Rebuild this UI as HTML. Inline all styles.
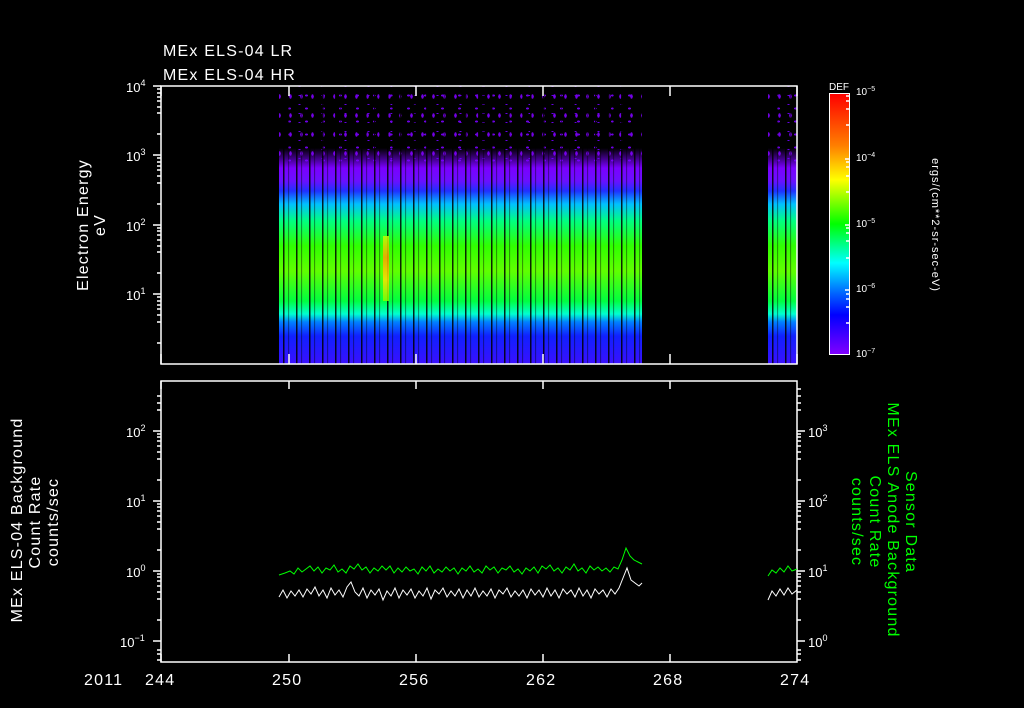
<!DOCTYPE html>
<html><head><style>
html,body{margin:0;padding:0;background:#000;}
#w{position:relative;width:1024px;height:708px;overflow:hidden;background:#000;font-family:"Liberation Sans",sans-serif;color:#fff;}
.spec{position:absolute;top:86px;height:278px;
background:linear-gradient(to bottom,rgba(0,0,0,0) 0px,rgba(0,0,0,0) 62px,rgba(122,0,255,.5) 72px,#7a00ff 82px,#6a10ff 95px,#2030ff 105px,#00c0ff 118px,#00ff80 135px,#30ff00 160px,#60ff00 185px,#00ff40 215px,#00ffd0 228px,#0080ff 236px,#1020ff 250px,#3a10ff 278px);}
.stripes{position:absolute;top:0;left:0;right:0;bottom:0;background:repeating-linear-gradient(to right,rgba(0,0,0,0) 0px,rgba(0,0,0,0) 4px,rgba(0,0,0,.85) 4px,rgba(0,0,0,.85) 5.5px,rgba(0,0,0,0) 5.5px,rgba(0,0,0,0) 9px,rgba(0,0,0,.6) 9px,rgba(0,0,0,0) 10.5px,rgba(0,0,0,0) 13px);}
.dots{position:absolute;top:0;left:0;right:0;height:80px;background-image:radial-gradient(#7a00ff 1.3px,transparent 1.5px),radial-gradient(#8000ff 1.2px,transparent 1.4px),radial-gradient(#7000ff 1.2px,transparent 1.4px);background-size:17px 13px,11px 19px,23px 9px;background-position:2px 3px,6px 1px,9px 5px;opacity:.9;}
.t{letter-spacing:1.2px}
</style></head><body><div id="w">
<div class="spec" style="left:279px;width:363px;"><div class="dots"></div><div class="stripes"></div>
<div style="position:absolute;left:104px;top:150px;width:6px;height:65px;background:linear-gradient(#c0ff00,#ffa000,#ffe000,#80ff00);opacity:.85"></div></div>
<div class="spec" style="left:768px;width:29px;"><div class="dots"></div><div class="stripes"></div></div>
<div style="position:absolute;left:829px;top:93px;width:21px;height:262px;background:linear-gradient(to bottom,#ff0000,#ff8000 20%,#ffff00 33%,#00ff00 50%,#00ffff 65%,#0060ff 77%,#0000ff 85%,#8000ff);box-sizing:border-box;border:1.5px solid #fff;"></div>
<svg width="1024" height="708" style="position:absolute;left:0;top:0" font-family="Liberation Sans, sans-serif" fill="#fff">
<g stroke="#fff" stroke-width="1.5" fill="none">
<rect x="161" y="86" width="636" height="278"/>
<rect x="161" y="381" width="636" height="281"/>
<path d="M161 86v10M289 86v10M416 86v10M543 86v10M670 86v10M797 86v10M161 364v-10M289 364v-10M416 364v-10M543 364v-10M670 364v-10M797 364v-10"/>
<path d="M161 381v8M289 381v8M416 381v8M543 381v8M670 381v8M161 662v-8M289 662v-8M416 662v-8M543 662v-8M670 662v-8"/>
<path d="M161 86h-8M161 155h-8M161 225h-8M161 294h-8M161 134h-4M161 113h-4M161 107h-4M161 101h-4M161 97h-4M161 93h-4M161 89h-4M161 204h-4M161 183h-4M161 176h-4M161 170h-4M161 166h-4M161 162h-4M161 158h-4M161 273h-4M161 252h-4M161 246h-4M161 240h-4M161 235h-4M161 231h-4M161 228h-4M161 343h-4M161 322h-4M161 315h-4M161 309h-4M161 305h-4M161 301h-4M161 297h-4"/>
<path d="M161 431h-8M161 501h-8M161 571h-8M161 641h-8M161 410h-4M161 403h-4M161 396h-4M161 480h-4M161 459h-4M161 452h-4M161 446h-4M161 441h-4M161 437h-4M161 434h-4M161 550h-4M161 529h-4M161 522h-4M161 516h-4M161 511h-4M161 507h-4M161 504h-4M161 620h-4M161 599h-4M161 592h-4M161 586h-4M161 581h-4M161 577h-4M161 574h-4M161 660h-4M161 654h-4M161 650h-4"/>
<path d="M797 431h8M797 501h8M797 571h8M797 641h8M797 410h4M797 403h4M797 396h4M797 389h4M797 480h4M797 459h4M797 452h4M797 446h4M797 441h4M797 437h4M797 434h4M797 550h4M797 529h4M797 522h4M797 516h4M797 511h4M797 507h4M797 504h4M797 620h4M797 599h4M797 592h4M797 586h4M797 581h4M797 577h4M797 574h4M797 660h4M797 654h4M797 650h4"/>
<path d="M850 159h-5M850 225h-5M850 290h-5M850 125h-4M850 109h-4M850 101h-4M850 96h-4M850 192h-4M850 176h-4M850 167h-4M850 162h-4M850 258h-4M850 241h-4M850 233h-4M850 228h-4M850 323h-4M850 307h-4M850 299h-4M850 294h-4"/>
</g>
<polyline fill="none" stroke="#00ff00" stroke-width="1" points="279,575 285,573 290,571 294,574 298,568 302,572 306,569 310,566 314,571 318,567 322,573 326,568 330,570 334,565 338,572 342,569 346,573 350,566 354,569 358,564 362,570 366,567 370,573 374,568 378,571 382,566 386,570 390,566 394,573 398,568 402,572 406,567 410,571 414,569 418,574 422,567 426,571 430,566 434,573 438,569 442,572 446,567 450,571 454,568 458,574 462,568 466,571 470,566 474,572 478,569 482,573 486,566 490,570 494,567 498,573 502,568 506,570 510,566 514,572 518,569 522,574 526,568 530,571 534,567 538,573 542,566 546,569 550,565 554,571 558,568 562,573 566,567 570,570 574,564 578,571 582,568 586,573 590,566 594,570 598,567 602,571 606,568 610,572 614,567 618,569 622,560 626,548 630,556 634,560 638,562 642,564"/>
<polyline fill="none" stroke="#00ff00" stroke-width="1" points="768,576 772,570 776,573 780,568 784,572 788,566 792,571 797,569"/>
<polyline fill="none" stroke="#fff" stroke-width="1" points="279,597 283,590 287,598 291,591 295,596 299,590 303,597 307,589 311,594 315,587 319,596 323,590 327,598 331,588 335,595 339,590 343,597 347,587 351,582 355,592 359,596 363,588 367,598 371,590 375,595 379,589 383,600 387,591 391,596 395,588 399,598 403,590 407,595 411,589 415,598 419,591 423,596 427,588 431,599 435,590 439,594 443,588 447,597 451,591 455,596 459,589 463,598 467,590 471,596 475,588 479,597 483,591 487,596 491,589 495,598 499,590 503,594 507,588 511,597 515,591 519,596 523,590 527,598 531,589 535,595 539,590 543,597 547,588 551,596 555,590 559,598 563,589 567,594 571,590 575,597 579,588 583,596 587,590 591,598 595,589 599,594 603,590 607,597 611,589 615,594 619,588 623,578 627,568 631,580 635,583 639,586 642,583"/>
<polyline fill="none" stroke="#fff" stroke-width="1" points="768,600 772,591 776,596 780,589 784,595 788,588 792,594 797,590"/>
<g font-size="16" class="t">
<text x="163" y="56">MEx ELS-04 LR</text>
<text x="163" y="80">MEx ELS-04 HR</text>
<text x="84" y="685">2011</text>
<text x="145" y="685">244</text><text x="272" y="685">250</text><text x="399" y="685">256</text><text x="526" y="685">262</text><text x="653" y="685">268</text><text x="780" y="685">274</text>
</g>
<g font-size="13">
<text x="126" y="92">10<tspan font-size="9" dy="-6">4</tspan></text>
<text x="126" y="161">10<tspan font-size="9" dy="-6">3</tspan></text>
<text x="126" y="231">10<tspan font-size="9" dy="-6">2</tspan></text>
<text x="126" y="300">10<tspan font-size="9" dy="-6">1</tspan></text>
<text x="126" y="437">10<tspan font-size="9" dy="-6">2</tspan></text>
<text x="126" y="507">10<tspan font-size="9" dy="-6">1</tspan></text>
<text x="126" y="577">10<tspan font-size="9" dy="-6">0</tspan></text>
<text x="120" y="647">10<tspan font-size="9" dy="-6">−1</tspan></text>
<text x="808" y="437">10<tspan font-size="9" dy="-6">3</tspan></text>
<text x="808" y="507">10<tspan font-size="9" dy="-6">2</tspan></text>
<text x="808" y="577">10<tspan font-size="9" dy="-6">1</tspan></text>
<text x="808" y="647">10<tspan font-size="9" dy="-6">0</tspan></text>
</g>
<g font-size="10">
<text x="829" y="90">DEF</text>
<text x="856" y="95">10<tspan font-size="7" dy="-4">−5</tspan></text>
<text x="856" y="161">10<tspan font-size="7" dy="-4">−4</tspan></text>
<text x="856" y="227">10<tspan font-size="7" dy="-4">−5</tspan></text>
<text x="856" y="292">10<tspan font-size="7" dy="-4">−6</tspan></text>
<text x="856" y="357">10<tspan font-size="7" dy="-4">−7</tspan></text>
<text transform="translate(932,225) rotate(90)" text-anchor="middle" font-size="11" letter-spacing="1">ergs/(cm**2-sr-sec-eV)</text>
</g>
<g font-size="16" text-anchor="middle" class="t">
<text transform="translate(88,225) rotate(-90)">Electron Energy</text>
<text transform="translate(105,225) rotate(-90)">eV</text>
<text transform="translate(22,520) rotate(-90)">MEx ELS-04 Background</text>
<text transform="translate(40,522) rotate(-90)">Count Rate</text>
<text transform="translate(58,522) rotate(-90)">counts/sec</text>
<g fill="#00ff00">
<text transform="translate(906,522) rotate(90)">Sensor Data</text>
<text transform="translate(888,520) rotate(90)">MEx ELS Anode Background</text>
<text transform="translate(870,522) rotate(90)">Count Rate</text>
<text transform="translate(852,522) rotate(90)">counts/sec</text>
</g>
</g>
</svg>
</div></body></html>
